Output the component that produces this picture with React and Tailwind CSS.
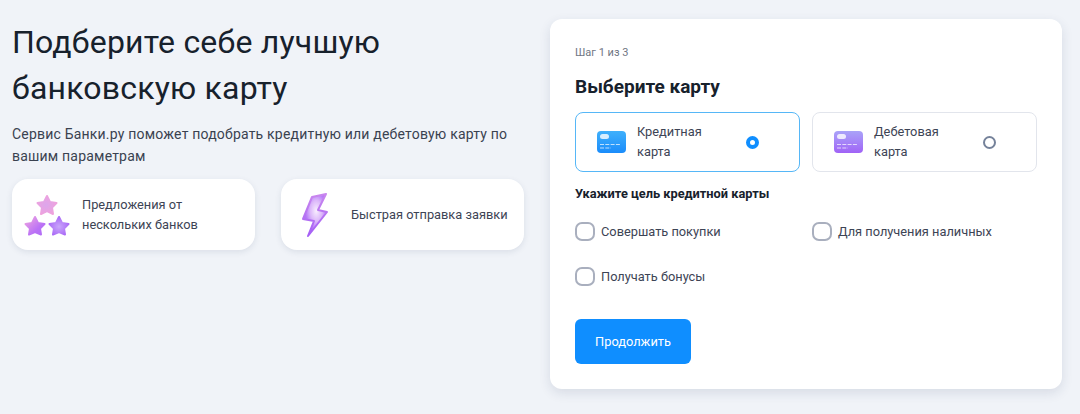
import React from 'react';

const Stars = () => (
    <svg width="46" height="42" viewBox="0 0 46 42" className="shrink-0">
        <defs>
            <radialGradient id="starA" cx="45%" cy="50%" r="60%">
                <stop offset="0%" stopColor="#dca6ec" />
                <stop offset="100%" stopColor="#f0a2dc" />
            </radialGradient>
            <linearGradient id="starB" x1="0" y1="0" x2="1" y2="1">
                <stop offset="0%" stopColor="#f0a6e0" />
                <stop offset="65%" stopColor="#bb72f6" />
                <stop offset="100%" stopColor="#b06cf6" />
            </linearGradient>
            <radialGradient id="starC" cx="50%" cy="55%" r="60%">
                <stop offset="0%" stopColor="#c9a6fb" />
                <stop offset="100%" stopColor="#a866f6" />
            </radialGradient>
            <filter id="soft"><feGaussianBlur stdDeviation="0.35" /></filter>
        </defs>
        <g filter="url(#soft)">
            <path d="M23 2 L26 8 L32.5 9 L28 13.5 L29 20 L23 17 L17 20 L18 13.5 L13.5 9 L20 8 Z" fill="url(#starA)" stroke="url(#starA)" strokeWidth="2" strokeLinejoin="round" />
            <path d="M11 23 L14 29 L20.5 30 L16 34.5 L17 40.5 L11 38 L5 40.5 L6 34.5 L1.5 30 L8 29 Z" fill="url(#starB)" stroke="url(#starB)" strokeWidth="2" strokeLinejoin="round" />
            <path d="M35 23 L38 29 L44.5 30 L40 34.5 L41 40.5 L35 38 L29 40.5 L30 34.5 L25.5 30 L32 29 Z" fill="url(#starC)" stroke="url(#starC)" strokeWidth="2" strokeLinejoin="round" />
        </g>
    </svg>
);

const Bolt = () => (
    <svg width="28" height="46" viewBox="0 0 28 46" className="shrink-0">
        <defs>
            <radialGradient id="boltG" cx="55%" cy="40%" r="45%">
                <stop offset="0%" stopColor="#f8eefe" />
                <stop offset="55%" stopColor="#dcb8fa" />
                <stop offset="100%" stopColor="#b374f7" />
            </radialGradient>
            <linearGradient id="boltS" x1="0" y1="0" x2="0" y2="1">
                <stop offset="0%" stopColor="#c987ee" />
                <stop offset="100%" stopColor="#a45ff6" />
            </linearGradient>
            <filter id="softBolt"><feGaussianBlur stdDeviation="0.4" /></filter>
        </defs>
        <path d="M25 2 L11 5 L2 27 L13 29 L7 44 L26 20 L17 18 Z" fill="url(#boltG)" stroke="url(#boltS)" strokeWidth="2" strokeLinejoin="round" filter="url(#softBolt)" />
    </svg>
);

const CardIcon = ({ from, to }) => (
    <div className={`w-[29px] h-[22px] rounded-[4px] bg-gradient-to-b ${from} ${to} shrink-0`}>
        <svg width="29" height="22" viewBox="0 0 29 22">
            <rect x="3" y="3" width="9" height="5" rx="2.5" fill="#fff" fillOpacity="0.8" />
            <path d="M3 13.5h20" stroke="#fff" strokeOpacity="0.7" strokeWidth="1.2" strokeDasharray="4 1.3" />
            <path d="M3 17h11" stroke="#fff" strokeOpacity="0.7" strokeWidth="1.2" strokeDasharray="4 1.3" />
        </svg>
    </div>
);

const Feature = ({ icon, children, gap }) => (
    <div className={`w-[243px] h-[71px] bg-white rounded-2xl shadow-[0_2px_6px_rgba(30,50,90,0.1)] flex items-center ${gap}`}>
        {icon}
        <div className="text-[12.8px] leading-[20px] text-[#3d4455]">{children}</div>
    </div>
);

const CardOption = ({ active, icon, children }) => (
    <div className={`flex-1 h-[60px] rounded-lg flex items-center pl-[21px] border ${active ? 'border-[#56b7f7]' : 'border-[#e2e5ec]'}`}>
        {icon}
        <div className="w-[109px] ml-[11px] text-[12.8px] leading-[20px] text-[#3d4455]">{children}</div>
        {active ? (
            <div className="w-[13px] h-[13px] rounded-full border-[4px] border-[#0f8eff] bg-white" />
        ) : (
            <div className="w-[13px] h-[13px] rounded-full border-2 border-[#75829a] bg-white" />
        )}
    </div>
);

const Check = ({ children }) => (
    <label className="flex items-center gap-[6px] text-[12.8px] text-[#3d4455]">
        <span className="w-[20px] h-[19px] rounded-[7px] border-2 border-[#a9afbe] bg-white" />
        {children}
    </label>
);

export default function App() {
    return (
        <div className="w-[1080px] h-[414px] overflow-hidden bg-[#f0f3f8] flex items-start pl-3 pt-[19px] font-['Roboto',sans-serif]">
            <div className="w-[512px]">
                <h1 className="text-[32px] leading-[46px] font-[450] tracking-[0.2px] text-[#17212c]">
                    Подберите себе лучшую<br />банковскую карту
                </h1>
                <p className="mt-[12px] text-[14px] leading-[22px] tracking-[0.2px] text-[#3a4250]">
                    Сервис Банки.ру поможет подобрать кредитную или дебетовую карту по вашим параметрам
                </p>
                <div className="mt-[12px] flex gap-[26px]">
                    <Feature icon={<Stars />} gap="pl-[12px] gap-[12px]">Предложения от<br />нескольких банков</Feature>
                    <Feature icon={<Bolt />} gap="pl-[20px] gap-[22px]">Быстрая отправка заявки</Feature>
                </div>
            </div>
            <div className="ml-[26px] w-[512px] h-[370px] bg-white rounded-xl shadow-[0_4px_12px_rgba(30,50,90,0.12)] px-[25px] pt-[27px]">
                <div className="text-[11px] leading-[13px] text-[#6f7683]">Шаг 1 из 3</div>
                <div className="mt-[15px] text-[19px] leading-[26px] font-bold text-[#17212c]">Выберите карту</div>
                <div className="mt-[12px] flex gap-[12px]">
                    <CardOption active icon={<CardIcon from="from-[#3fb0fb]" to="to-[#1a8cfb]" />}>Кредитная<br />карта</CardOption>
                    <CardOption icon={<CardIcon from="from-[#a9a2f8]" to="to-[#a062f6]" />}>Дебетовая<br />карта</CardOption>
                </div>
                <div className="mt-[14px] text-[12.8px] leading-[16px] font-bold text-[#17212c]">Укажите цель кредитной карты</div>
                <div className="mt-[20px] grid grid-cols-[237px_1fr] gap-y-[26px]">
                    <Check>Совершать покупки</Check>
                    <Check>Для получения наличных</Check>
                    <Check>Получать бонусы</Check>
                </div>
                <button className="mt-[33px] w-[116px] h-[45px] rounded-md bg-[#0f8eff] text-white text-[12.8px] font-normal">Продолжить</button>
            </div>
        </div>
    );
}
